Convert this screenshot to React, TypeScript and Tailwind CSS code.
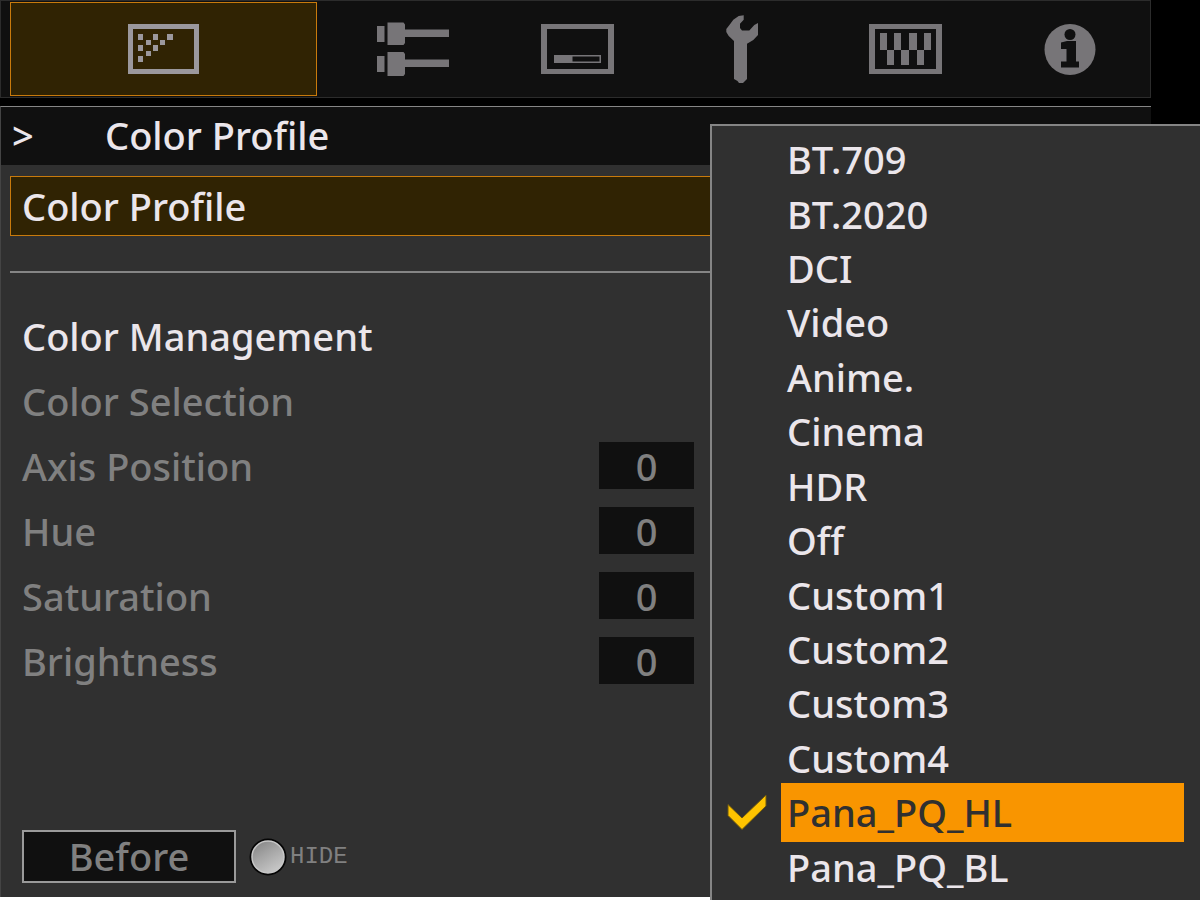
import { useState, type ReactNode } from 'react';
import clsx from 'clsx';

const profiles = [
  'BT.709',
  'BT.2020',
  'DCI',
  'Video',
  'Anime.',
  'Cinema',
  'HDR',
  'Off',
  'Custom1',
  'Custom2',
  'Custom3',
  'Custom4',
  'Pana_PQ_HL',
  'Pana_PQ_BL',
];

const adjustments = ['Axis Position', 'Hue', 'Saturation', 'Brightness'];

function PictureIcon() {
  return (
    <svg viewBox="0 0 72 50" fill="currentColor" shapeRendering="crispEdges" className="w-[72px] h-[50px]">
      <path fillRule="evenodd" d="M0 0h71v50H0zM5 5v40h61V5z" />
      <path d="M10 10h5v6h-5zM25 10h5v6h-5zM39 10h6v6h-6zM18 16h5v5h-5zM32 16h5v5h-5zM10 21h5v6h-5zM25 21h5v6h-5zM18 27h5v5h-5zM10 32h5v6h-5z" />
    </svg>
  );
}

function InputIcon() {
  return (
    <svg viewBox="0 0 72 54" fill="currentColor" className="w-[72px] h-[54px]">
      <path d="M0 4h7.5v16H0zM10.500.5h16l1.500 2v5H72v7.500H28v6l-1.500 2h-16z" />
      <path d="M0 34h7.500v16H0zM10.500 30h16l1.500 2v5.500H72V45H28v7l-1.500 2h-16z" />
    </svg>
  );
}

function InstallIcon() {
  return (
    <svg viewBox="0 0 73 50" fill="currentColor" className="w-[73px] h-[50px]">
      <path fillRule="evenodd" d="M0 0h73v50H0zM6 5v40h61V5z" />
      <path fillRule="evenodd" d="M13 31h47v8H13zM31.500 32.500v5h27v-5z" />
    </svg>
  );
}

function WrenchIcon() {
  return (
    <svg viewBox="0 0 32 68" fill="currentColor" className="w-8 h-[68px]">
      <path d="M17.700.3 12.700 1 7.300 4.700 4 9.300.3 14v3L2.700 21 8 26v38l3.500 2 1.500 2h4l2-2 2-2V28.700L27.300 25 32 20V8l-3.700 2-5 5.500H16L14 13V8.700l3.700-4z" />
    </svg>
  );
}

function FunctionIcon() {
  return (
    <svg viewBox="0 0 73 50" fill="currentColor" className="w-[73px] h-[50px]">
      <path fillRule="evenodd" d="M0 0h73v50H0zM6 5v40h61V5z" />
      <path d="M11 9h7v17h-7zM25 9h7v17h-7zM40 9h8v17h-8zM55 9h7v17h-7zM18 26h7v15h-7zM32 26h8v15h-8zM48 26h7v15h-7z" />
    </svg>
  );
}

function InfoIcon() {
  return (
    <svg viewBox="0 0 52 51" className="w-[52px] h-[51px]">
      <circle cx="26" cy="25.500" r="25.500" fill="currentColor" />
      <circle cx="26" cy="10.500" r="5.500" fill="#101010" />
      <path d="M17 18.500 23 17h9v20.500h3v6H17v-6h5.500V25H17z" fill="#101010" />
    </svg>
  );
}

const otherTabs: { name: string; icon: ReactNode }[] = [
  { name: 'Input Signal', icon: <InputIcon /> },
  { name: 'Installation', icon: <InstallIcon /> },
  { name: 'Display Setup', icon: <WrenchIcon /> },
  { name: 'Function', icon: <FunctionIcon /> },
  { name: 'Information', icon: <InfoIcon /> },
];

function TabBar() {
  return (
    <nav className="mr-[49px] flex h-[98px] gap-4 border border-[#2c2c2c] bg-[#101010] pt-px pl-[9px] pb-px">
      <button
        aria-label="Picture Adjust"
        className="flex w-[307px] items-center justify-center border border-[#c87a0c] bg-[#302303] text-[#9b989d]"
      >
        <PictureIcon />
      </button>
      <div className="flex flex-1 justify-between">
        {otherTabs.map((tab) => (
          <button key={tab.name} aria-label={tab.name} className="flex w-40 items-center justify-center text-[#777578]">
            {tab.icon}
          </button>
        ))}
      </div>
    </nav>
  );
}

function ProfileMenu() {
  const [selected, setSelected] = useState('Pana_PQ_HL');

  return (
    <div
      role="menu"
      aria-label="Color Profile"
      className="absolute top-[124px] right-0 bottom-0 flex w-[490px] flex-col border-t-2 border-l-2 border-[#858585] bg-[#303030] pt-[6px] pr-4 pb-[6px]"
    >
      {profiles.map((name) => {
        const active = name === selected;
        return (
          <button
            key={name}
            role="menuitemradio"
            aria-checked={active}
            onClick={() => setSelected(name)}
            className="flex min-h-0 flex-1 items-center text-left"
          >
            <span className="flex w-[69px] shrink-0 justify-center">
              {active && (
                <svg viewBox="0 0 40 36" className="h-9 w-10">
                  <path d="M1 10.500 15 24 39 1v11L15 35.500 1 21.500z" fill="#ffc400" stroke="#6b5710" strokeWidth="1" />
                </svg>
              )}
            </span>
            <span
              className={clsx(
                'flex h-[59px] flex-1 items-center pl-[6px]',
                active ? 'bg-[#f99500] text-[#303030]' : 'text-[#ebe6eb]',
              )}
            >
              {name}
            </span>
          </button>
        );
      })}
    </div>
  );
}

export default function App() {
  return (
    <div className="relative flex min-h-screen flex-col bg-black font-['Noto_Sans',sans-serif] text-[38px] leading-[52px] font-medium text-[#ebe6eb]">
      <TabBar />

      <main className="mt-2 mr-[49px] flex flex-1 flex-col border-t border-l border-t-[#858585] border-l-[#444] bg-[#303030]">
        <header className="flex h-[58px] items-center bg-[#101010] pl-[11px] pb-[2px]">
          <span className="w-[93px]">&gt;</span>
          <h1>Color Profile</h1>
        </header>

        <div className="flex flex-1 flex-col pt-[11px] pl-[9px]">
          <button className="flex h-[60px] items-center border border-[#c87a0c] bg-[#302303] pl-[11px] text-left">
            Color Profile
          </button>
          <hr className="mt-[35px] border-t-2 border-[#858585]" />

          <section className="mt-[30px] mr-[457px] flex flex-col pl-3 text-[#808080]">
            <button className="flex h-[65px] items-center text-left text-[#ebe6eb]">Color Management</button>
            <button disabled className="flex h-[65px] items-center text-left">
              Color Selection
            </button>
            {adjustments.map((name) => (
              <label key={name} className="flex h-[65px] items-center justify-between">
                {name}
                <input
                  type="text"
                  defaultValue="0"
                  disabled
                  className="h-[47px] w-[95px] bg-[#101010] text-center"
                />
              </label>
            ))}
          </section>

          <footer className="mt-auto mb-[14px] flex items-center pl-3 text-[#808080]">
            <button className="h-[53px] w-[214px] border-2 border-[#9a9a9a] bg-[#101010] leading-[49px]">Before</button>
            <button className="ml-[13px] flex items-center gap-[3px] font-['Liberation_Mono',monospace] text-2xl font-normal">
              <svg viewBox="0 0 38 38" className="size-[38px]">
                <defs>
                  <linearGradient id="knob" x1="0.2" y1="0.1" x2="0.7" y2="0.9">
                    <stop offset="0" stopColor="#8c8c8c" />
                    <stop offset="0.4" stopColor="#a4a4a4" />
                    <stop offset="1" stopColor="#c4c4c4" />
                  </linearGradient>
                </defs>
                <circle cx="19" cy="19" r="18.500" fill="#050505" />
                <circle cx="19" cy="19" r="16" fill="url(#knob)" stroke="#c8c8c8" strokeWidth="1.500" />
              </svg>
              HIDE
            </button>
          </footer>
        </div>
      </main>
      <div className="mr-[49px] h-[3px] bg-white" />

      <ProfileMenu />
    </div>
  );
}
